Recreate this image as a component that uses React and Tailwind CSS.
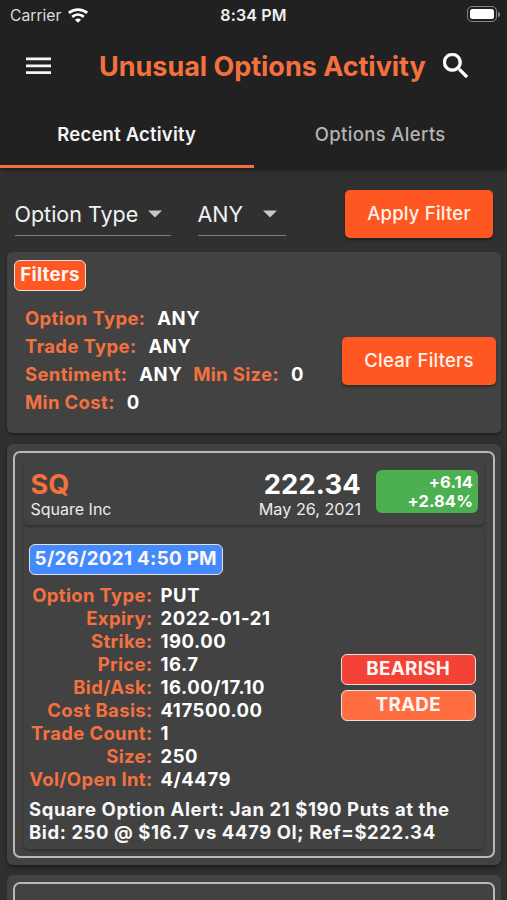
import { useState } from 'react';

const TABS = ['Recent Activity', 'Options Alerts'];

const FILTERS = [
  [{ label: 'Option Type', value: 'ANY' }],
  [{ label: 'Trade Type', value: 'ANY' }],
  [{ label: 'Sentiment', value: 'ANY' }, { label: 'Min Size', value: '0' }],
  [{ label: 'Min Cost', value: '0' }],
];

const DETAILS = [
  ['Option Type', 'PUT'],
  ['Expiry', '2022-01-21'],
  ['Strike', '190.00'],
  ['Price', '16.7'],
  ['Bid/Ask', '16.00/17.10'],
  ['Cost Basis', '417500.00'],
  ['Trade Count', '1'],
  ['Size', '250'],
  ['Vol/Open Int', '4/4479'],
];

function StatusBar() {
  return (
    <div className="grid h-[30px] grid-cols-3 items-center pl-[10px] pr-[7px] text-[#f0f0f0]">
      <div className="flex items-center gap-[7px] pt-px text-[15.7px] text-[#dcdcdc]">
        Carrier
        <svg width="20" height="15" viewBox="0 0 20 15" fill="none" stroke="#fff" strokeWidth="2.9">
          <path d="M0.9 5C6 0.5 14 0.5 19.1 5" />
          <path d="M4.2 8.8C7.6 5.9 12.4 5.9 15.8 8.8" />
          <path d="M10 14.8L6.9 11.7C8.6 10.1 11.4 10.1 13.1 11.7Z" fill="#fff" stroke="none" />
        </svg>
      </div>
      <div className="pr-[3px] text-center text-[16px] font-semibold tracking-[0.15px] whitespace-nowrap">8:34 PM</div>
      <div className="flex items-center justify-end gap-px pb-[2px]">
        <div className="h-[16px] w-[30px] rounded-[5px] border border-[#858585] p-[2px]">
          <div className="h-full rounded-[2.5px] bg-white" />
        </div>
        <div className="h-[5px] w-[2px] rounded-r-full bg-[#858585]" />
      </div>
    </div>
  );
}

function Select({ children, className }) {
  return (
    <button type="button" className={`flex h-[43px] items-center justify-between border-b-[1.5px] border-[#7c7c7c] pt-px pr-[9px] text-[21.5px] text-[#f2f2f2] ${className}`}>
      {children}
      <svg width="14" height="8" viewBox="0 0 14 8" fill="#c8c8c8"><path d="M0 0.5H14L7 7.5Z" /></svg>
    </button>
  );
}

function ActionButton({ children, className }) {
  return (
    <button type="button" className={`h-[48px] shrink-0 rounded-[5px] bg-[#ff5722] text-[18.5px] font-medium tracking-[0.22px] text-[#fff3ee] shadow-[0_2px_3px_rgba(0,0,0,0.35)] ${className}`}>
      {children}
    </button>
  );
}

function Tag({ children, className }) {
  return (
    <div className={`flex h-[31px] items-center justify-center rounded-[6px] border-[1.5px] border-[#e6e1e0] text-[18.8px] font-bold tracking-[0.3px] whitespace-nowrap text-[#fdf6f4] ${className}`}>
      {children}
    </div>
  );
}

export default function App() {
  const [tab, setTab] = useState(0);

  return (
    <div className="h-[900px] w-[507px] overflow-hidden bg-[#303030] font-['Inter',sans-serif] text-white">
      <header className="h-[168px] bg-[#212121] shadow-[0_2px_5px_rgba(0,0,0,0.45)]">
        <StatusBar />
        <div className="flex h-[70px] items-center">
          <svg className="ml-[26px] mt-px" width="25" height="18" viewBox="0 0 25 18" fill="#f5f5f5">
            <path d="M0 0.5H25V3.3H0ZM0 7.4H25V10.2H0ZM0 14.3H25V17.1H0Z" />
          </svg>
          <h1 className="ml-[48px] w-[326px] pt-[4px] text-[27px] font-bold tracking-[-0.03px] whitespace-nowrap text-[#f4713f]">Unusual Options Activity</h1>
          <svg className="ml-[18px]" width="25" height="25" viewBox="3 3 17.5 17.5" fill="#fff" stroke="#fff" strokeWidth="0.4">
            <path d="M15.5 14h-.79l-.28-.27C15.41 12.59 16 11.11 16 9.5 16 5.91 13.09 3 9.5 3S3 5.91 3 9.5 5.91 16 9.5 16c1.61 0 3.09-.59 4.23-1.57l.27.28v.79l5 4.99L20.49 19l-4.99-5zm-6 0C7.01 14 5 11.99 5 9.5S7.01 5 9.5 5 14 7.01 14 9.5 11.99 14 9.5 14z" />
          </svg>
        </div>
        <nav className="grid h-[68px] grid-cols-2">
          {TABS.map((name, i) => (
            <button
              key={name}
              type="button"
              onClick={() => setTab(i)}
              className={`border-b-[3px] pt-[4px] text-[18.5px] ${tab === i ? 'border-[#f4713f] font-semibold tracking-[0.2px] text-[#f5f5f5]' : 'border-transparent font-medium tracking-[0.35px] text-[#b3b3b3]'}`}
            >
              {name}
            </button>
          ))}
        </nav>
      </header>

      <main className="pr-[6px] pl-[7px]">
        <div className="flex h-[84px] items-center pt-[8px] pr-[8px] pl-[7.5px]">
          <Select className="w-[156.5px]">Option Type</Select>
          <Select className="ml-[26.5px] w-[88.5px]">ANY</Select>
          <ActionButton className="ml-auto w-[148px]">Apply Filter</ActionButton>
        </div>

        <section className="h-[181px] rounded-[5px] bg-[#424242] pt-[8px] pr-[5px] pl-[7px] shadow-[0_2px_3px_rgba(0,0,0,0.35)]">
          <Tag className="w-[72px] bg-[#ff5722]">Filters</Tag>
          <div className="flex items-start justify-between pl-[11px]">
            <div className="mt-[12.5px] text-[18.5px] leading-[28.3px] font-bold tracking-[0.45px]">
              {FILTERS.map(row => (
                <div key={row[0].label} className="flex gap-[11px]">
                  {row.map(f => (
                    <span key={f.label} className="flex gap-[12px]">
                      <span className="tracking-[0.35px] text-[#f4713f]">{f.label}:</span>
                      <span>{f.value}</span>
                    </span>
                  ))}
                </div>
              ))}
            </div>
            <ActionButton className="mt-[46px] w-[154px]">Clear Filters</ActionButton>
          </div>
        </section>

        <section className="mt-[11px] h-[421px] rounded-[6px] bg-[#424242] px-[6px] pt-[7px] shadow-[0_2px_4px_rgba(0,0,0,0.45)]">
          <article className="h-[407px] rounded-[7px] border-2 border-[#b8b8b8] px-[9px] pt-[6px]">
            <div className="flex h-[66px] rounded-[5px] pt-[11px] pr-[6px] pl-[6.5px] shadow-[0_2px_3px_rgba(0,0,0,0.3)]">
              <div className="pt-px">
                <div className="text-[27px] leading-[27px] font-bold text-[#f4713f]">SQ</div>
                <div className="text-[16px] leading-[23px] text-[#ececec]">Square Inc</div>
              </div>
              <div className="ml-auto pt-px text-right">
                <div className="text-[27.3px] leading-[27px] font-bold tracking-[0.2px]">222.34</div>
                <div className="text-[16.2px] leading-[23px] text-[#ececec]">May 26, 2021</div>
              </div>
              <div className="ml-[15px] h-[43px] w-[102px] rounded-[6px] bg-[#4caf50] pt-[3px] pr-[5px] text-right text-[16.5px] leading-[18.5px] font-bold tracking-[0.1px]">
                <div>+6.14</div>
                <div>+2.84%</div>
              </div>
            </div>

            <div className="h-[324px] rounded-[5px] pt-[19px] pr-[8px] pl-[5px] shadow-[0_2px_3px_rgba(0,0,0,0.3)]">
              <Tag className="w-[193.5px] bg-[#448aff]">5/26/2021 4:50 PM</Tag>
              <div className="mt-[9px] flex items-center justify-between">
                <dl className="text-[18.5px] leading-[22.95px] font-bold tracking-[0.55px]">
                  {DETAILS.map(([label, value]) => (
                    <div key={label} className="flex gap-[8px]">
                      <dt className="flex w-[123.5px] justify-end tracking-[0.35px] whitespace-nowrap text-[#f4713f]">{label}:</dt>
                      <dd>{value}</dd>
                    </div>
                  ))}
                </dl>
                <div className="flex w-[135.5px] flex-col gap-[5px]">
                  <Tag className="bg-[#f44336]">BEARISH</Tag>
                  <Tag className="bg-[#ff6e40]">TRADE</Tag>
                </div>
              </div>
              <p className="mt-[7px] text-[18.5px] leading-[23px] font-bold tracking-[0.58px] whitespace-nowrap text-[#f7f7f7]">
                Square Option Alert: Jan 21 $190 Puts at the
                <br />
                Bid: 250 @ $16.7 vs 4479 OI; Ref=$222.34
              </p>
            </div>
          </article>
        </section>

        <section className="mt-[10px] h-[421px] rounded-[6px] bg-[#424242] px-[6px] pt-[7px]">
          <article className="h-[407px] rounded-[7px] border-2 border-[#b8b8b8]" />
        </section>
      </main>
    </div>
  );
}
